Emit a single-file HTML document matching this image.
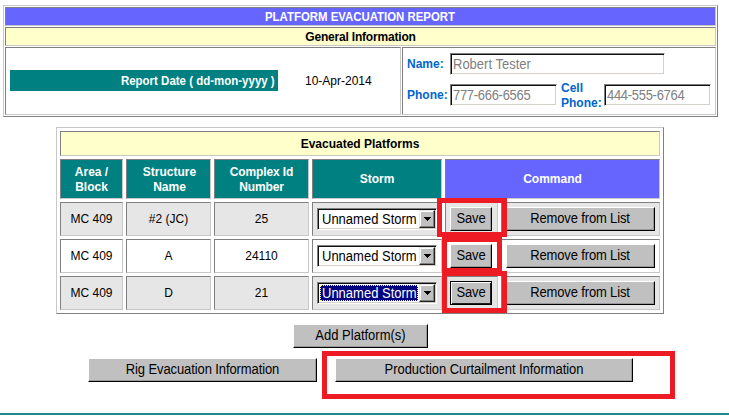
<!DOCTYPE html>
<html>
<head>
<meta charset="utf-8">
<title>Platform Evacuation Report</title>
<style>
html,body{margin:0;padding:0;background:#fff;}
body{width:729px;height:418px;position:relative;overflow:hidden;font-family:"Liberation Sans",sans-serif;font-size:12px;color:#000;}
.abs{position:absolute;box-sizing:border-box;}
.tbl{position:absolute;box-sizing:border-box;border:1px solid;border-color:#c8c8c8 #808080 #808080 #c8c8c8;background:#fff;}
.c{position:absolute;box-sizing:border-box;border:1px solid;border-color:#808080 #c8c8c8 #c8c8c8 #808080;display:flex;align-items:center;justify-content:center;text-align:center;line-height:14px;}
.blue{background:#6666ff;color:#fff;font-weight:bold;}
.yel{background:#ffffcc;font-weight:bold;}
.teal{background:#008080;color:#fff;font-weight:bold;line-height:15px;}
.g{background:#e6e6e6;}
.w{background:#fff;}
.lbl{position:absolute;color:#0066cc;font-weight:bold;font-size:12px;line-height:14px;white-space:nowrap;}
.inp{position:absolute;box-sizing:border-box;background:#fff;border:1px solid;border-color:#808080 #fff #fff #808080;box-shadow:inset 1px 1px 0 #101010, inset -1px -1px 0 #d4d0c8;color:#808080;font-size:13px;line-height:16px;padding:2px 0 0 2px;white-space:nowrap;overflow:hidden;}
.btn{position:absolute;box-sizing:border-box;background:#c0c0c0;border:1px solid;border-color:#fff #000 #000 #fff;box-shadow:inset -1px -1px 0 #9a9a9a;font-size:13px;line-height:15px;display:flex;align-items:center;justify-content:center;white-space:nowrap;color:#000;padding:0 0 4px 0;}
.sel{position:absolute;box-sizing:border-box;width:120px;height:22px;background:#fff;border:1px solid;border-color:#808080 #fff #fff #808080;box-shadow:inset 1px 1px 0 #101010, inset -1px -1px 0 #d4d0c8;font-size:13px;line-height:16px;white-space:nowrap;}
.sel span{position:absolute;left:2px;top:2px;width:98px;height:16px;box-sizing:border-box;padding:0 0 0 2px;}
.sel .hl{background:#000080;color:#fff;outline:1px dotted #ffff80;outline-offset:-1px;}
.arrow{position:absolute;left:101px;top:1px;width:16px;height:18px;box-sizing:border-box;background:#c0c0c0;border:1px solid;border-color:#e8e8e8 #202020 #202020 #e8e8e8;box-shadow:inset -1px -1px 0 #808080, inset 1px 1px 0 #fff;}
.arrow:after{content:"";position:absolute;left:4px;top:6px;width:7px;height:4px;background:linear-gradient(#000,#000) 0 0/7px 1px no-repeat,linear-gradient(#000,#000) 1px 1px/5px 1px no-repeat,linear-gradient(#000,#000) 2px 2px/3px 1px no-repeat,linear-gradient(#000,#000) 3px 3px/1px 1px no-repeat;}
.btn.def{border-color:#000;box-shadow:inset 1px 1px 0 #fff, inset -1px -1px 0 #202020;}
.t{display:inline-block;font-weight:normal;transform:scaleY(1.1);transform-origin:0 0;}
.red{position:absolute;box-sizing:border-box;border:5px solid #ed1c24;}
</style>
</head>
<body>

<!-- Table 1 -->
<div class="tbl" style="left:3px;top:5px;width:715px;height:112px;"></div>
<div class="c blue" style="left:5px;top:7px;width:711px;height:19px;"><span style="display:inline-block;transform:scaleX(0.95);margin-right:1px;">PLATFORM EVACUATION REPORT</span></div>
<div class="c yel" style="left:5px;top:27px;width:711px;height:19px;letter-spacing:-0.19px;">General Information</div>
<div class="c w" style="left:5px;top:47px;width:396px;height:68px;"></div>
<div class="c w" style="left:402px;top:47px;width:314px;height:68px;"></div>
<div class="abs teal" style="left:10px;top:70px;width:268px;height:21px;line-height:20px;padding-top:1px;text-align:right;padding-right:3px;white-space:nowrap;"><span style="display:inline-block;transform:scaleX(0.957);transform-origin:100% 50%;">Report Date ( dd-mon-yyyy )</span></div>
<div class="abs" style="left:305px;top:74px;line-height:14px;">10-Apr-2014</div>

<div class="lbl" style="left:407px;top:57px;">Name:</div>
<div class="inp" style="left:450px;top:53px;width:215px;height:22px;"><span class="t">Robert Tester</span></div>
<div class="lbl" style="left:407px;top:88px;">Phone:</div>
<div class="inp" style="left:450px;top:84px;width:107px;height:22px;letter-spacing:-0.3px;"><span class="t">777-666-6565</span></div>
<div class="lbl" style="left:561px;top:81px;line-height:15px;">Cell<br>Phone:</div>
<div class="inp" style="left:604px;top:84px;width:107px;height:22px;letter-spacing:-0.3px;"><span class="t">444-555-6764</span></div>

<!-- Table 2 -->
<div class="tbl" style="left:56px;top:127px;width:608px;height:187px;"></div>
<div class="c yel" style="left:60px;top:131px;width:600px;height:25px;">Evacuated Platforms</div>

<div class="c teal" style="left:60px;top:159px;width:63px;height:40px;padding-top:2px;">Area /<br>Block</div>
<div class="c teal" style="left:126px;top:159px;width:85px;height:40px;padding-top:2px;padding-left:2px;">Structure<br>Name</div>
<div class="c teal" style="left:214px;top:159px;width:95px;height:40px;padding-top:2px;letter-spacing:-0.12px;">Complex Id<br>Number</div>
<div class="c teal" style="left:312px;top:159px;width:130px;height:40px;">Storm</div>
<div class="c blue" style="left:445px;top:159px;width:215px;height:40px;">Command</div>

<!-- row 1 -->
<div class="c g" style="left:60px;top:202px;width:63px;height:34px;">MC 409</div>
<div class="c g" style="left:126px;top:202px;width:85px;height:34px;">#2 (JC)</div>
<div class="c g" style="left:214px;top:202px;width:95px;height:34px;">25</div>
<div class="c g" style="left:312px;top:202px;width:130px;height:34px;"></div>
<div class="c g" style="left:445px;top:202px;width:53px;height:34px;"></div>
<div class="c g" style="left:501px;top:202px;width:159px;height:34px;"></div>
<div class="sel" style="left:317px;top:208px;"><span><b class="t">Unnamed Storm</b></span><div class="arrow"></div></div>
<div class="btn" style="left:450px;top:207px;width:42px;height:24px;letter-spacing:-0.2px;"><span class="t">Save</span></div>
<div class="btn" style="left:506px;top:207px;width:149px;height:24px;letter-spacing:-0.15px;padding-right:1px;"><span class="t">Remove from List</span></div>

<!-- row 2 -->
<div class="c w" style="left:60px;top:239px;width:63px;height:34px;">MC 409</div>
<div class="c w" style="left:126px;top:239px;width:85px;height:34px;">A</div>
<div class="c w" style="left:214px;top:239px;width:95px;height:34px;">24110</div>
<div class="c w" style="left:312px;top:239px;width:130px;height:34px;"></div>
<div class="c w" style="left:445px;top:239px;width:53px;height:34px;"></div>
<div class="c w" style="left:501px;top:239px;width:159px;height:34px;"></div>
<div class="sel" style="left:317px;top:245px;"><span><b class="t">Unnamed Storm</b></span><div class="arrow"></div></div>
<div class="btn" style="left:450px;top:244px;width:42px;height:24px;letter-spacing:-0.2px;"><span class="t">Save</span></div>
<div class="btn" style="left:506px;top:244px;width:149px;height:24px;letter-spacing:-0.15px;padding-right:1px;"><span class="t">Remove from List</span></div>

<!-- row 3 -->
<div class="c g" style="left:60px;top:276px;width:63px;height:34px;">MC 409</div>
<div class="c g" style="left:126px;top:276px;width:85px;height:34px;">D</div>
<div class="c g" style="left:214px;top:276px;width:95px;height:34px;">21</div>
<div class="c g" style="left:312px;top:276px;width:130px;height:34px;"></div>
<div class="c g" style="left:445px;top:276px;width:53px;height:34px;"></div>
<div class="c g" style="left:501px;top:276px;width:159px;height:34px;"></div>
<div class="sel" style="left:317px;top:282px;"><span class="hl"><b class="t">Unnamed Storm</b></span><div class="arrow"></div></div>
<div class="btn def" style="left:450px;top:281px;width:42px;height:24px;letter-spacing:-0.2px;"><span class="t">Save</span></div>
<div class="btn" style="left:506px;top:281px;width:149px;height:24px;letter-spacing:-0.15px;padding-right:1px;"><span class="t">Remove from List</span></div>

<!-- bottom buttons -->
<div class="btn" style="left:293px;top:324px;width:135px;height:24px;"><span class="t">Add Platform(s)</span></div>
<div class="btn" style="left:88px;top:358px;width:229px;height:24px;letter-spacing:-0.1px;"><span class="t">Rig Evacuation Information</span></div>
<div class="btn" style="left:335px;top:358px;width:298px;height:24px;letter-spacing:-0.06px;"><span class="t">Production Curtailment Information</span></div>

<!-- red annotations -->
<div class="red" style="left:437px;top:198px;width:70px;height:39px;"></div>
<div class="red" style="left:442px;top:237px;width:60px;height:36px;"></div>
<div class="red" style="left:442px;top:271px;width:65px;height:42px;"></div>
<div class="red" style="left:322px;top:351px;width:353px;height:48px;"></div>

<!-- bottom rule -->
<div class="abs" style="left:0;top:413px;width:729px;height:2px;background:#1f8a8a;"></div>

</body>
</html>
